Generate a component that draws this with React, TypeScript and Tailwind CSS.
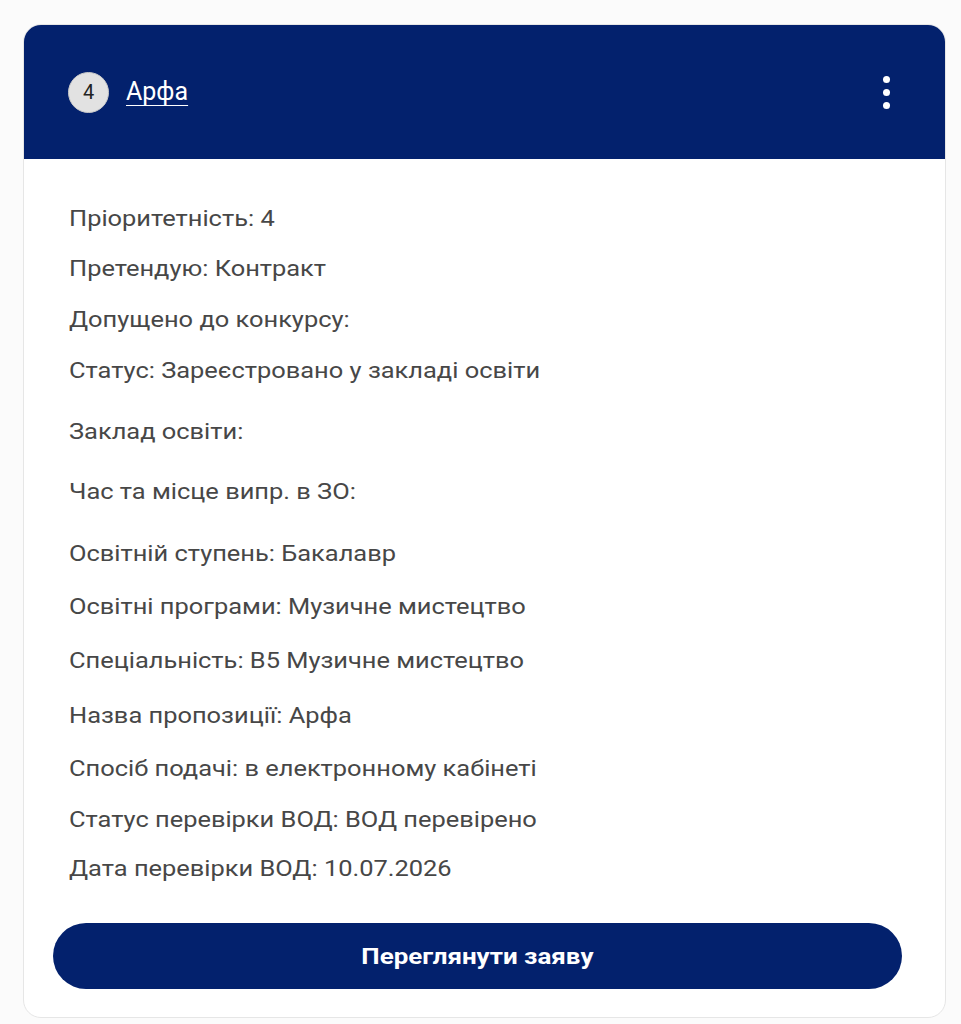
const rows: { text: string; mt: string }[] = [
  { text: 'Пріоритетність: 4', mt: 'mt-0' },
  { text: 'Претендую: Контракт', mt: 'mt-[18px]' },
  { text: 'Допущено до конкурсу:', mt: 'mt-[19px]' },
  { text: 'Статус: Зареєстровано у закладі освіти', mt: 'mt-[19px]' },
  { text: 'Заклад освіти:', mt: 'mt-[29px]' },
  { text: 'Час та місце випр. в ЗО:', mt: 'mt-[28px]' },
  { text: 'Освітній ступень: Бакалавр', mt: 'mt-[30px]' },
  { text: 'Освітні програми: Музичне мистецтво', mt: 'mt-[21px]' },
  { text: 'Спеціальність: B5 Музичне мистецтво', mt: 'mt-[22px]' },
  { text: 'Назва пропозиції: Арфа', mt: 'mt-[23px]' },
  { text: 'Спосіб подачі: в електронному кабінеті', mt: 'mt-[21px]' },
  { text: 'Статус перевірки ВОД: ВОД перевірено', mt: 'mt-[19px]' },
  { text: 'Дата перевірки ВОД: 10.07.2026', mt: 'mt-[17px]' },
];

const App = () => {
  return (
    <div className="min-h-screen bg-[#fbfbfb] px-[23px] pt-[24px] font-['Roboto',sans-serif]">
      <div className="w-[923px] rounded-[18px] border border-[#e6e6e6] bg-white overflow-hidden">
        {/* Header */}
        <div className="h-[134px] bg-[#03216d] flex items-center justify-between pl-[44px] pr-[55px]">
          <div className="flex items-center gap-[17px]">
            <div className="w-[41px] h-[41px] rounded-full bg-[#e2e2e2] border border-[#c9c9c9] flex items-center justify-center text-[20px] text-[#222]">
              4
            </div>
            <a className="text-white text-[25px] underline underline-offset-[5px] decoration-1">Арфа</a>
          </div>
          <div className="flex flex-col gap-[6px]">
            <span className="w-[7px] h-[7px] rounded-full bg-white" />
            <span className="w-[7px] h-[7px] rounded-full bg-white" />
            <span className="w-[7px] h-[7px] rounded-full bg-white" />
          </div>
        </div>

        {/* Details */}
        <div className="px-[45px] pt-[44px]">
          {rows.map((row) => (
            <div key={row.text} className={`${row.mt} text-[22px] leading-[32px] text-[#474747]`}>
              <span className="inline-block origin-left scale-x-[1.155]">{row.text}</span>
            </div>
          ))}
        </div>

        <div className="pl-[29px] pr-[43px] pt-[38px] pb-[28px]">
          <button className="w-full h-[66px] rounded-full bg-[#03216d] text-white text-[22px] font-bold">
            <span className="inline-block scale-x-[1.18]">Переглянути заяву</span>
          </button>
        </div>
      </div>
    </div>
  );
};

export default App;
